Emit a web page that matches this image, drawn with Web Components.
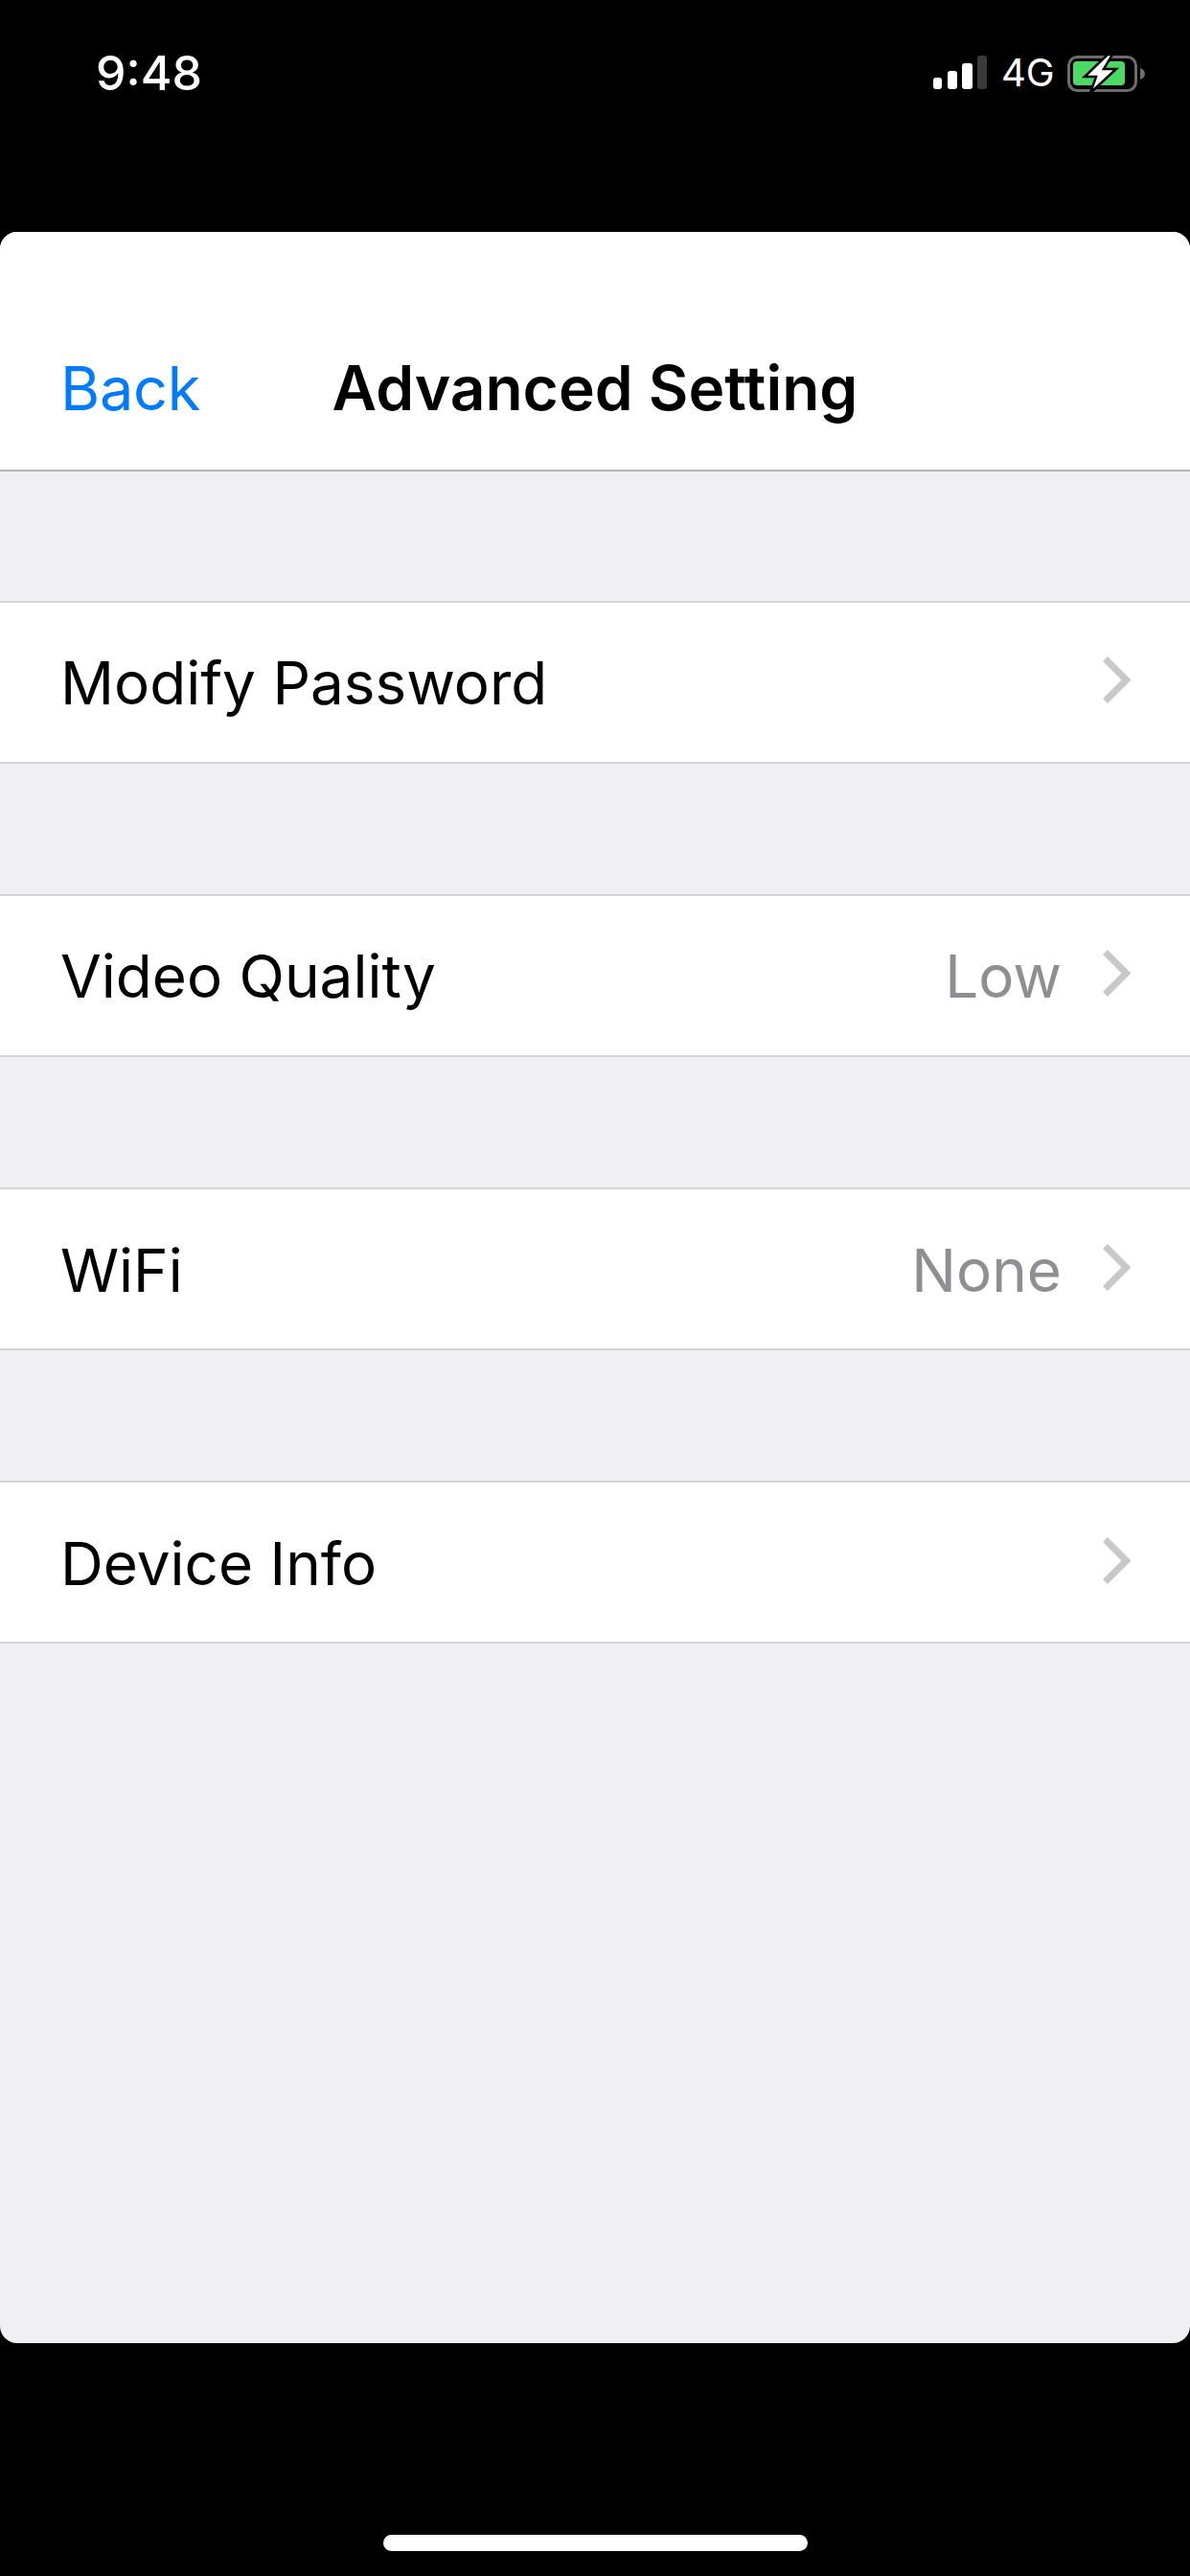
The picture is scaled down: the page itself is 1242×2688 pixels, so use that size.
<!DOCTYPE html>
<html><head><meta charset="utf-8">
<style>
html,body{margin:0;padding:0;background:#000;}
body{font-family:Inter,"Liberation Sans",sans-serif;}
</style></head>
<body>
<template id="t-status">
<style>
:host{display:flex;box-sizing:border-box;height:242px;padding:58px 47px 0 100px;justify-content:space-between;align-items:flex-start;color:#fff}
.time{font:500 50px/36px Inter,sans-serif;letter-spacing:0;width:108px;white-space:nowrap}
.right{display:flex;align-items:flex-start;}
.net{font:400 40px/35px Inter,sans-serif;margin:0 16px 0 15px;height:37px;display:block;width:53px;white-space:nowrap}
svg{display:block}
</style>
<div class="time"><slot name="time"></slot></div>
<div class="right">
<svg width="56" height="35" viewBox="0 0 56 35"><rect x="0" y="23" width="9" height="12" rx="3" fill="#fff"/><rect x="15" y="16" width="10" height="19" rx="3" fill="#fff"/><rect x="30" y="8" width="11" height="27" rx="3" fill="#fff"/><rect x="46" y="0" width="10" height="35" rx="3" fill="#3a3a3a"/></svg>
<div class="net"><slot name="net"></slot></div>
<svg width="81" height="40" viewBox="0 0 81 40"><rect x="1.5" y="1.5" width="70" height="35" rx="9" fill="none" stroke="#6c6c6c" stroke-width="3"/><rect x="6" y="6" width="54" height="25" rx="4" fill="#4cd964"/><path d="M76 13c3 1 5 3 5 6s-2 5-5 6z" fill="#6c6c6c"/><path d="M42-1 18 22h12l-6 17 27-25H38l9-15z" fill="#fff" stroke="#000" stroke-width="2.5" stroke-linejoin="miter"/></svg>
</div>
</template>

<template id="t-header">
<style>
:host{display:grid;grid-template-columns:1fr auto 1fr;box-sizing:border-box;height:250px;padding:0 63px 49px;align-items:end;background:#fff;border-bottom:2px solid #b6b6ba}
.t{font:600 64px/72px Inter,sans-serif;color:#000;white-space:nowrap}
.b{font:400 63px/72px Inter,sans-serif;color:#007aff;letter-spacing:-.3px}
</style>
<div class="b"><slot name="back"></slot></div>
<div class="t"><slot name="title"></slot></div>
<div></div>
</template>

<template id="t-row">
<style>
:host{display:flex;box-sizing:border-box;height:170px;align-items:center;background:#fff;border-top:2px solid #d4d4d7;border-bottom:2px solid #d4d4d7;padding:3px 62px 0 63px;font:400 62px/72px Inter,sans-serif;color:#000}
.l{flex:1;white-space:nowrap}
.v{color:#8e8e93;margin-right:42px;white-space:nowrap}
svg{display:block;flex:none;margin-top:-7px}
</style>
<div class="l"><slot></slot></div>
<div class="v"><slot name="value"></slot></div>
<svg width="30" height="51" viewBox="0 0 30 51"><path d="M3.5 3.5 25.5 25.5 3.5 47.5" fill="none" stroke="#c7c7cc" stroke-width="7" stroke-linejoin="miter"/></svg>
</template>

<template id="t-sheet">
<style>
:host{display:flex;flex-direction:column;height:2203px;background:#efeff4;border-radius:18px;overflow:hidden}
.list{display:flex;flex-direction:column;gap:136.33px;padding-top:134.5px}
</style>
<slot name="header"></slot>
<div class="list"><slot></slot></div>
</template>

<template id="t-home">
<style>
:host{display:flex;justify-content:center;box-sizing:border-box;height:243px;padding-top:200px}
div{width:443px;height:17px;background:#fff;border-radius:9px}
</style>
<div></div>
</template>

<template id="t-app">
<style>:host{display:flex;flex-direction:column;width:1242px;height:2688px;background:#000;overflow:hidden}</style>
<slot></slot>
</template>

<app-frame>
  <status-bar><span slot="time">9:48</span><span slot="net">4G</span></status-bar>
  <settings-sheet>
    <nav-header slot="header"><span slot="back">Back</span><span slot="title">Advanced Setting</span></nav-header>
    <setting-row>Modify Password</setting-row>
    <setting-row>Video Quality<span slot="value">Low</span></setting-row>
    <setting-row>WiFi<span slot="value">None</span></setting-row>
    <setting-row>Device Info</setting-row>
  </settings-sheet>
  <home-bar></home-bar>
</app-frame>

<script>
const defs={'app-frame':'t-app','status-bar':'t-status','settings-sheet':'t-sheet','nav-header':'t-header','setting-row':'t-row','home-bar':'t-home'};
for(const [n,t] of Object.entries(defs)){
  customElements.define(n,class extends HTMLElement{
    constructor(){super();this.attachShadow({mode:'open'}).appendChild(document.getElementById(t).content.cloneNode(true));}
  });
}
</script>
</body></html>
